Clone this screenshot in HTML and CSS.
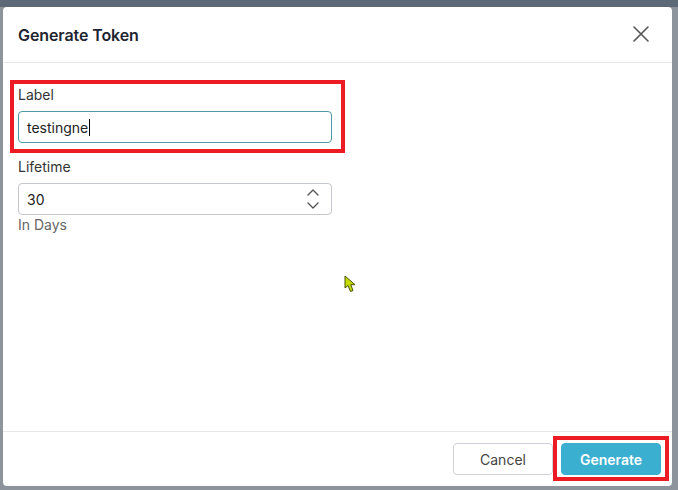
FILE: index.html
```html
<!DOCTYPE html>
<html lang="en">
<head>
<meta charset="utf-8">
<title>Generate Token</title>
<link rel="stylesheet" href="styles.css">
</head>
<body>
<div class="dialog">
  <div class="dialog-header">
    <h2 class="dialog-title">Generate Token</h2>
    <button class="close-btn" aria-label="Close">
      <svg width="16" height="16" viewBox="0 0 16 16"><path d="M1 1L15 15M15 1L1 15" stroke="#555" stroke-width="1.6" fill="none" stroke-linecap="round"/></svg>
    </button>
  </div>
  <div class="dialog-body">
    <div class="field field-highlight">
      <label class="field-label">Label</label>
      <div class="text-input focused"><span>testingne</span><span class="caret"></span></div>
      <div class="annot annot-field"></div>
    </div>
    <div class="field field-lifetime">
      <label class="field-label">Lifetime</label>
      <div class="text-input">
        <span class="grow">30</span>
        <svg class="spin" width="12" height="20" viewBox="0 0 12 20"><path d="M1 6L6 1L11 6M1 14L6 19L11 14" stroke="#555" stroke-width="1.4" fill="none" stroke-linecap="round" stroke-linejoin="round"/></svg>
      </div>
      <div class="hint">In Days</div>
    </div>
  </div>
  <div class="dialog-footer">
    <button class="btn btn-cancel">Cancel</button>
    <div class="btn-wrap">
      <button class="btn btn-primary">Generate</button>
      <div class="annot annot-btn"></div>
    </div>
  </div>
  <svg class="pointer" width="14" height="18" viewBox="0 0 14 18"><path d="M1 1L1 13L4 10.5L6.5 16.5L9 15.5L6.7 9.7L11 9.7Z" fill="#c4dc00" stroke="#4a5200" stroke-width="1" stroke-linejoin="round"/></svg>
</div>
</body>
</html>
```

FILE: styles.css
```css
* { box-sizing: border-box; }
html, body { margin: 0; padding: 0; }
body {
  width: 678px;
  height: 490px;
  overflow: hidden;
  background: linear-gradient(#5e6977 0, #5e6977 7px, #8d949c 7px);
  padding: 7px 6px 0 3px;
  font-family: "Inter", "Liberation Sans", sans-serif;
  color: #333;
}
.dialog {
  position: relative;
  width: 669px;
  height: 479px;
  background: #fff;
  border-radius: 4px;
  display: flex;
  flex-direction: column;
}
.dialog-header {
  height: 56px;
  border-bottom: 1px solid #e6e8ea;
  display: flex;
  align-items: center;
  justify-content: space-between;
  padding: 0 23px 0 15px;
}
.dialog-title {
  margin: 0;
  font-size: 16px;
  font-weight: 600;
  color: #1e2530;
  letter-spacing: -0.1px;
}
.close-btn {
  border: 0;
  background: none;
  padding: 0;
  width: 17px;
  height: 16px;
  display: flex;
  align-items: center;
  justify-content: center;
  margin-top: -2px;
}
.dialog-body {
  flex: 1;
  padding: 22px 15px 0;
}
.field { position: relative; width: 314px; }
.field-lifetime { margin-top: 14px; }
.field-label {
  display: block;
  font-size: 14px;
  line-height: 20px;
  color: #333;
  margin-bottom: 6px;
}
.text-input {
  height: 32px;
  border: 1px solid #c4c7cb;
  border-radius: 4px;
  display: flex;
  align-items: center;
  padding: 0 12px 0 8px;
  font-size: 14px;
  color: #222;
}
.text-input.focused { border-color: #4d9aa6; }
.caret {
  display: inline-block;
  width: 1px;
  height: 17px;
  background: #000;
  margin-left: 1px;
}
.grow { flex: 1; }
.spin { display: block; }
.hint {
  font-size: 14px;
  line-height: 20px;
  color: #666;
}
.annot {
  position: absolute;
  border: 4px solid #ed1c24;
  pointer-events: none;
}
.annot-field {
  left: -8px;
  top: -5px;
  width: 335px;
  height: 73px;
}
.dialog-footer {
  height: 55px;
  border-top: 1px solid #e6e8ea;
  display: flex;
  justify-content: flex-end;
  align-items: center;
  gap: 8px;
  padding: 0 11px 0 0;
}
.btn {
  width: 100px;
  height: 32px;
  border-radius: 4px;
  font-family: inherit;
  font-size: 14px;
  padding: 0;
}
.btn-cancel {
  background: #fff;
  border: 1px solid #cfd2d6;
  color: #444;
}
.btn-primary {
  background: #3aafcf;
  border: 1px solid #3aafcf;
  color: #fff;
  font-weight: 600;
}
.btn-wrap { position: relative; }
.btn-wrap .btn { display: block; }
.annot-btn {
  left: -8px;
  top: -7px;
  width: 116px;
  height: 45px;
}
.pointer {
  position: absolute;
  left: 341px;
  top: 268px;
}
```
